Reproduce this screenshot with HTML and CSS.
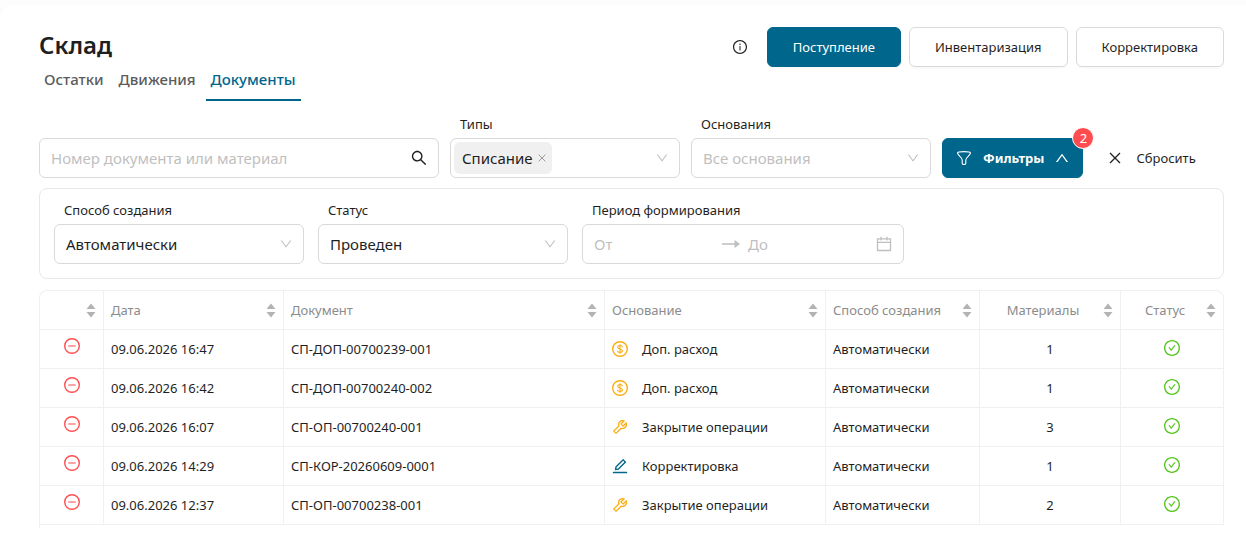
FILE: index.html
```html
<!DOCTYPE html>
<html lang="ru">
<head>
  <meta charset="UTF-8">
  <meta name="viewport" content="width=device-width, initial-scale=1">
  <title>Склад</title>
  <link rel="stylesheet" href="styles.css">
</head>
<body>
  <!-- Icons -->
  <svg class="sprite" aria-hidden="true">
    <symbol id="i-info" viewBox="64 64 896 896">
      <path d="M512 64C264.6 64 64 264.6 64 512s200.6 448 448 448 448-200.6 448-448S759.4 64 512 64zm0 820c-205.4 0-372-166.6-372-372s166.6-372 372-372 372 166.6 372 372-166.6 372-372 372z"/>
      <path d="M464 336a48 48 0 1096 0 48 48 0 10-96 0zm72 112h-48c-4.400 0-8 3.600-8 8v272c0 4.400 3.600 8 8 8h48c4.400 0 8-3.600 8-8V456c0-4.400-3.600-8-8-8z"/>
    </symbol>
    <symbol id="i-search" viewBox="64 64 896 896">
      <path d="M909.6 854.5L649.9 594.8C690.2 542.7 712 479 712 412c0-80.2-31.3-155.400-87.900-212.100-56.600-56.700-132-87.900-212.100-87.900s-155.500 31.300-212.100 87.900C143.2 256.5 112 331.8 112 412c0 80.100 31.300 155.500 87.900 212.100C256.5 680.8 331.8 712 412 712c67 0 130.600-21.800 182.700-62l259.700 259.600a8.200 8.200 0 0011.600 0l43.600-43.500a8.200 8.200 0 000-11.600zM570.4 570.4C528 612.7 471.8 636 412 636s-116-23.300-158.400-65.600C211.3 528 188 471.8 188 412s23.300-116.100 65.600-158.400C296 211.3 352.2 188 412 188s116.100 23.200 158.400 65.600S636 352.2 636 412s-23.300 116.100-65.600 158.400z"/>
    </symbol>
    <symbol id="i-down" viewBox="64 64 896 896">
      <path d="M884 256h-75c-5.100 0-9.900 2.500-12.900 6.600L512 654.2 227.9 262.6c-3-4.100-7.800-6.600-12.900-6.600h-75c-6.500 0-10.300 7.400-6.500 12.700l352.600 486.100c12.800 17.600 39 17.600 51.700 0l352.600-486.100c3.900-5.300.1-12.700-6.400-12.700z"/>
    </symbol>
    <symbol id="i-close" viewBox="0 0 12 12">
      <path d="M1 1l10 10M11 1L1 11" fill="none" stroke="currentColor" stroke-width="1.300"/>
    </symbol>
    <symbol id="i-filter" viewBox="0 0 16 16">
      <path d="M1.500 2.800C1.500 2.100 4 1.600 8 1.600s6.500.5 6.500 1.200c0 2.600-4.700 4.600-4.700 7.200v3.200c0 .7-.8 1.300-1.800 1.300s-1.800-.6-1.800-1.300V10C6.200 7.400 1.500 5.400 1.500 2.800z" fill="none" stroke="currentColor" stroke-width="1.100"/>
    </symbol>
    <symbol id="i-arrow" viewBox="0 0 18 10">
      <path d="M0 4.300h12.500V1L18 5l-5.500 4V5.700H0z"/>
    </symbol>
    <symbol id="i-calendar" viewBox="64 64 896 896">
      <path d="M880 184H712v-64c0-4.400-3.600-8-8-8h-56c-4.400 0-8 3.600-8 8v64H384v-64c0-4.400-3.600-8-8-8h-56c-4.400 0-8 3.600-8 8v64H144c-17.700 0-32 14.300-32 32v664c0 17.700 14.300 32 32 32h736c17.700 0 32-14.300 32-32V216c0-17.700-14.300-32-32-32zm-40 656H184V460h656v380zM184 392V256h128v48c0 4.400 3.600 8 8 8h56c4.400 0 8-3.600 8-8v-48h256v48c0 4.400 3.600 8 8 8h56c4.400 0 8-3.600 8-8v-48h128v136H184z"/>
    </symbol>
    <symbol id="i-sort" viewBox="0 0 10 15">
      <path d="M5 .5L9.500 6h-9zM5 14.500L.5 9h9z"/>
    </symbol>
    <symbol id="i-minus" viewBox="0 0 16 16">
      <circle cx="8" cy="8" r="7.300" fill="none" stroke="currentColor" stroke-width="1.400"/>
      <path d="M4.300 8h7.400" fill="none" stroke="currentColor" stroke-width="1.400" opacity=".75"/>
    </symbol>
    <symbol id="i-check" viewBox="64 64 896 896">
      <path d="M512 64C264.6 64 64 264.6 64 512s200.6 448 448 448 448-200.6 448-448S759.4 64 512 64zm0 820c-205.4 0-372-166.6-372-372s166.6-372 372-372 372 166.6 372 372-166.6 372-372 372z"/>
      <path d="M699 353h-46.900c-10.200 0-19.900 4.900-25.900 13.300L469 584.3l-71.200-98.800c-6-8.300-15.600-13.300-25.900-13.300H325c-6.500 0-10.300 7.400-6.500 12.700l124.600 172.800a31.800 31.800 0 0051.700 0l210.600-292c3.900-5.300.1-12.700-6.400-12.700z"/>
    </symbol>
    <symbol id="i-dollar" viewBox="0 0 16 16">
      <circle cx="8" cy="8" r="7.300" fill="none" stroke="currentColor" stroke-width="1.400"/>
      <path d="M10.300 6.100C10.200 5.100 9.300 4.500 8 4.500s-2.300.6-2.300 1.700c0 1.200 1.100 1.500 2.300 1.800s2.400.6 2.400 1.800c0 1.100-1 1.700-2.400 1.700s-2.400-.6-2.500-1.700M8 3.300v9.400" fill="none" stroke="currentColor" stroke-width="1.100"/>
    </symbol>
    <symbol id="i-tool" viewBox="64 64 896 896">
      <path d="M876.6 239.5c-.5-.9-1.200-1.800-2-2.500-5-5-13.100-5-18.100 0L684.2 409.3l-67.900-67.900L788.7 169c.8-.8 1.400-1.600 2-2.500 3.600-6.100 1.600-13.900-4.500-17.500-98.200-58-226.800-44.700-311.300 39.700-67 67-89.200 162-66.500 247.400l-293 293c-3 3-2.800 7.900.3 11l169.700 169.700c3.100 3.100 8.100 3.300 11 .3l292.900-292.900c85.500 22.800 180.500.7 247.600-66.400 84.400-84.500 97.700-213.100 39.700-311.300zM786 499.8c-58.100 58.100-145.300 69.300-214.600 33.600l-8.800 8.800-.1-.1-274 274.100-79.200-79.200 230.100-230.100s0 .1.100.1l52.800-52.800c-35.700-69.300-24.500-156.500 33.600-214.600a184.200 184.200 0 01144-53.500L537 318.9a32.050 32.050 0 000 45.300l124.500 124.500a32.050 32.050 0 0045.300 0l132.800-132.800c3.700 51.800-14.400 104.800-53.600 143.900z"/>
    </symbol>
    <symbol id="i-edit" viewBox="64 64 896 896">
      <path d="M257.7 752c2 0 4-.2 6-.5L431.9 722c2-.4 3.900-1.300 5.300-2.800l423.900-423.900a9.960 9.960 0 000-14.100L694.9 114.9c-1.900-1.900-4.400-2.900-7.100-2.900s-5.200 1-7.100 2.900L256.8 538.8c-1.500 1.500-2.400 3.300-2.800 5.300l-29.500 168.200a33.500 33.500 0 009.400 29.800c6.600 6.400 14.900 9.900 23.800 9.900zm67.400-174.400L687.8 215l73.300 73.300-362.700 362.600-88.900 15.700 15.600-89zM880 836H144c-17.700 0-32 14.300-32 32v36c0 4.400 3.600 8 8 8h784c4.400 0 8-3.600 8-8v-36c0-17.700-14.300-32-32-32z"/>
    </symbol>
  </svg>

  <main class="card">
    <header class="header">
      <div>
        <h1 class="title">Склад</h1>
        <nav class="tabs">
          <a class="tab" href="#stock">Остатки</a>
          <a class="tab" href="#moves">Движения</a>
          <a class="tab tab-active" href="#docs" aria-current="page">Документы</a>
        </nav>
      </div>
      <div class="actions">
        <button class="icon-btn info-btn" aria-label="Справка"><svg class="icon-14"><use href="#i-info"/></svg></button>
        <button class="btn btn-primary">Поступление</button>
        <button class="btn">Инвентаризация</button>
        <button class="btn">Корректировка</button>
      </div>
    </header>

    <form class="filters">
      <div class="box search">
        <input class="control" type="text" placeholder="Номер документа или материал" aria-label="Номер документа или материал">
        <button type="button" class="icon-btn" aria-label="Найти"><svg class="icon-16"><use href="#i-search"/></svg></button>
      </div>

      <div class="field field-types">
        <label for="types">Типы</label>
        <div class="box box-tags">
          <span class="tag">Списание
            <button type="button" class="icon-btn tag-close" aria-label="Удалить"><svg class="icon-8"><use href="#i-close"/></svg></button>
          </span>
          <select class="control" id="types"><option value=""></option></select>
          <svg class="arrow"><use href="#i-down"/></svg>
        </div>
      </div>

      <div class="field field-reasons">
        <label for="reasons">Основания</label>
        <div class="box">
          <select class="control control-empty" id="reasons"><option>Все основания</option></select>
          <svg class="arrow"><use href="#i-down"/></svg>
        </div>
      </div>

      <button type="button" class="btn btn-primary btn-filter">
        <svg class="icon-16"><use href="#i-filter"/></svg>
        Фильтры
        <svg class="icon-14 icon-up"><use href="#i-down"/></svg>
        <span class="badge">2</span>
      </button>

      <button type="reset" class="reset">
        <svg class="icon-12"><use href="#i-close"/></svg>
        Сбросить
      </button>
    </form>

    <section class="panel">
      <div class="field field-wide">
        <label for="method">Способ создания</label>
        <div class="box">
          <select class="control" id="method"><option>Автоматически</option></select>
          <svg class="arrow"><use href="#i-down"/></svg>
        </div>
      </div>
      <div class="field field-wide">
        <label for="status">Статус</label>
        <div class="box">
          <select class="control" id="status"><option>Проведен</option></select>
          <svg class="arrow"><use href="#i-down"/></svg>
        </div>
      </div>
      <div class="field field-period">
        <label for="from">Период формирования</label>
        <div class="box">
          <input class="control" id="from" type="text" placeholder="От">
          <svg class="range-arrow"><use href="#i-arrow"/></svg>
          <input class="control" id="to" type="text" placeholder="До" aria-label="До">
          <svg class="icon-16 calendar"><use href="#i-calendar"/></svg>
        </div>
      </div>
    </section>

    <div class="table-wrap">
      <table class="table">
        <colgroup>
          <col class="col-type">
          <col class="col-date">
          <col>
          <col class="col-reason">
          <col class="col-method">
          <col class="col-count">
          <col class="col-status">
        </colgroup>
        <thead>
          <tr>
            <th><div class="th"><span></span><button class="icon-btn" aria-label="Сортировать"><svg class="sort"><use href="#i-sort"/></svg></button></div></th>
            <th><div class="th"><span>Дата</span><button class="icon-btn" aria-label="Сортировать"><svg class="sort"><use href="#i-sort"/></svg></button></div></th>
            <th><div class="th"><span>Документ</span><button class="icon-btn" aria-label="Сортировать"><svg class="sort"><use href="#i-sort"/></svg></button></div></th>
            <th><div class="th"><span>Основание</span><button class="icon-btn" aria-label="Сортировать"><svg class="sort"><use href="#i-sort"/></svg></button></div></th>
            <th><div class="th"><span>Способ создания</span><button class="icon-btn" aria-label="Сортировать"><svg class="sort"><use href="#i-sort"/></svg></button></div></th>
            <th class="center"><div class="th"><span>Материалы</span><button class="icon-btn" aria-label="Сортировать"><svg class="sort"><use href="#i-sort"/></svg></button></div></th>
            <th class="center"><div class="th"><span>Статус</span><button class="icon-btn" aria-label="Сортировать"><svg class="sort"><use href="#i-sort"/></svg></button></div></th>
          </tr>
        </thead>
        <tbody>
          <tr>
            <td class="mark mark-type red"><svg class="icon-16"><use href="#i-minus"/></svg></td>
            <td>09.06.2026 16:47</td>
            <td>СП-ДОП-00700239-001</td>
            <td><div class="reason"><svg class="icon-16 orange"><use href="#i-dollar"/></svg>Доп. расход</div></td>
            <td>Автоматически</td>
            <td class="center">1</td>
            <td class="mark green"><svg class="icon-16"><use href="#i-check"/></svg></td>
          </tr>
          <tr>
            <td class="mark mark-type red"><svg class="icon-16"><use href="#i-minus"/></svg></td>
            <td>09.06.2026 16:42</td>
            <td>СП-ДОП-00700240-002</td>
            <td><div class="reason"><svg class="icon-16 orange"><use href="#i-dollar"/></svg>Доп. расход</div></td>
            <td>Автоматически</td>
            <td class="center">1</td>
            <td class="mark green"><svg class="icon-16"><use href="#i-check"/></svg></td>
          </tr>
          <tr>
            <td class="mark mark-type red"><svg class="icon-16"><use href="#i-minus"/></svg></td>
            <td>09.06.2026 16:07</td>
            <td>СП-ОП-00700240-001</td>
            <td><div class="reason"><svg class="icon-16 orange"><use href="#i-tool"/></svg>Закрытие операции</div></td>
            <td>Автоматически</td>
            <td class="center">3</td>
            <td class="mark green"><svg class="icon-16"><use href="#i-check"/></svg></td>
          </tr>
          <tr>
            <td class="mark mark-type red"><svg class="icon-16"><use href="#i-minus"/></svg></td>
            <td>09.06.2026 14:29</td>
            <td>СП-КОР-20260609-0001</td>
            <td><div class="reason"><svg class="icon-16 blue"><use href="#i-edit"/></svg>Корректировка</div></td>
            <td>Автоматически</td>
            <td class="center">1</td>
            <td class="mark green"><svg class="icon-16"><use href="#i-check"/></svg></td>
          </tr>
          <tr>
            <td class="mark mark-type red"><svg class="icon-16"><use href="#i-minus"/></svg></td>
            <td>09.06.2026 12:37</td>
            <td>СП-ОП-00700238-001</td>
            <td><div class="reason"><svg class="icon-16 orange"><use href="#i-tool"/></svg>Закрытие операции</div></td>
            <td>Автоматически</td>
            <td class="center">2</td>
            <td class="mark green"><svg class="icon-16"><use href="#i-check"/></svg></td>
          </tr>
        </tbody>
      </table>
    </div>
  </main>
</body>
</html>
```
FILE: styles.css
```css
* {
  box-sizing: border-box;
}

body {
  margin: 0;
  padding-top: 5px;
  background: #fcfcfc;
  color: #1f1f1f;
  font-family: 'Segoe UI', 'Noto Sans', sans-serif;
  font-size: 13px;
  line-height: 20px;
}

button, input, select {
  font: inherit;
  color: inherit;
}

svg {
  fill: currentColor;
  flex: none;
}

.sprite {
  position: absolute;
  width: 0;
  height: 0;
}

.card {
  min-height: calc(100vh - 5px);
  padding: 22px 22px 20px 39px;
  background: #fff;
  border-radius: 14px 0 0 0;
}

/* Header */
.header {
  display: flex;
  justify-content: space-between;
  align-items: flex-start;
}

.title {
  margin: 0;
  font-size: 24px;
  font-weight: 600;
  line-height: 36px;
}

.tabs {
  display: flex;
  gap: 5px;
}

.tab {
  padding: 6px 5px 10px;
  border-bottom: 2px solid transparent;
  color: #5c5c5c;
  font-size: 15px;
  font-weight: 500;
  text-decoration: none;
}

.tab-active {
  color: #00668c;
  border-bottom-color: #00668c;
}

.actions {
  display: flex;
  align-items: center;
  gap: 8px;
}

.btn {
  height: 40px;
  padding: 0 25px;
  background: #fff;
  border: 1px solid #d9d9d9;
  border-radius: 6px;
  box-shadow: 0 2px 0 rgba(0, 0, 0, 0.02);
  cursor: pointer;
}

.btn-primary {
  background: #00668c;
  border-color: #00668c;
  color: #fff;
}

.icon-btn {
  display: flex;
  padding: 0;
  background: none;
  border: none;
  cursor: pointer;
}

.info-btn {
  margin-right: 12px;
}

/* Filters */
.filters {
  display: flex;
  align-items: flex-end;
  gap: 11px;
  margin-top: 13px;
}

.field label {
  display: block;
  padding: 0 10px 4px;
}

.search {
  width: 400px;
}

.field-types {
  width: 230px;
}

.field-reasons {
  width: 240px;
}

.field-wide {
  width: 250px;
}

.field-period {
  width: 322px;
}

.box {
  display: flex;
  align-items: center;
  height: 40px;
  padding: 0 11px;
  background: #fff;
  border: 1px solid #d9d9d9;
  border-radius: 6px;
}

.box-tags {
  padding-left: 3px;
}

.control {
  flex: 1;
  min-width: 0;
  padding: 0;
  appearance: none;
  background: none;
  border: none;
  outline: none;
  font-size: 15px;
}

.control::placeholder,
.control-empty {
  color: #bfbfbf;
  opacity: 1;
}

.arrow {
  width: 12px;
  height: 12px;
  color: #bfbfbf;
  pointer-events: none;
}

.tag {
  display: flex;
  align-items: center;
  gap: 5px;
  height: 32px;
  padding: 0 6px 0 8px;
  background: #f0f0f0;
  border-radius: 6px;
  font-size: 15px;
}

.tag-close {
  color: #8c8c8c;
}

.btn-filter {
  position: relative;
  display: flex;
  align-items: center;
  gap: 11px;
  padding: 0 13px;
  font-weight: 700;
}

.badge {
  position: absolute;
  top: -12px;
  right: -12px;
  width: 22px;
  height: 22px;
  border: 1px solid #fff;
  border-radius: 11px;
  background: #ff4d4f;
  font-weight: 400;
  text-align: center;
}

.icon-up {
  transform: rotate(180deg);
}

.reset {
  display: flex;
  align-items: center;
  gap: 15px;
  height: 40px;
  margin-left: 9px;
  background: none;
  border: none;
  cursor: pointer;
}

.panel {
  display: flex;
  gap: 14px;
  margin-top: 10px;
  padding: 11px 14px 14px;
  border: 1px solid #e8e8e8;
  border-radius: 8px;
}

.range-arrow {
  width: 18px;
  height: 10px;
  margin-right: 8px;
  color: #bfbfbf;
}

.calendar {
  color: #bfbfbf;
}

/* Table */
.table-wrap {
  margin-top: 11px;
  padding-bottom: 3px;
  border-top: 1px solid #f0f0f0;
  border-left: 1px solid #f0f0f0;
  border-radius: 8px 8px 0 0;
}

.table {
  width: 100%;
  table-layout: fixed;
  border-collapse: separate;
  border-spacing: 0;
}

.table th,
.table td {
  height: 39px;
  padding: 0 7px;
  border-right: 1px solid #f0f0f0;
  border-bottom: 1px solid #f0f0f0;
  text-align: left;
}

.table th {
  color: #8c8c8c;
  font-weight: 400;
}

.table th:last-child {
  border-top-right-radius: 8px;
}

.table .center {
  text-align: center;
}

.table .mark {
  padding-bottom: 2px;
}

.table .mark-type {
  padding-bottom: 6px;
}

.mark svg {
  display: block;
  margin: 0 auto;
}

.col-type {
  width: 64px;
}

.col-date {
  width: 180px;
}

.col-reason {
  width: 221px;
}

.col-method {
  width: 154px;
}

.col-count {
  width: 141px;
}

.col-status {
  width: 103px;
}

.th {
  display: flex;
  align-items: center;
  gap: 4px;
}

.th span {
  flex: 1;
}

.sort {
  width: 10px;
  height: 15px;
  color: #b3b3b3;
}

.reason {
  display: flex;
  align-items: center;
  gap: 14px;
}

.red {
  color: #ff4d4f;
}

.green {
  color: #52c41a;
}

.orange {
  color: #faad14;
}

.blue {
  color: #00668c;
}

.icon-8 {
  width: 8px;
  height: 8px;
}

.icon-12 {
  width: 12px;
  height: 12px;
}

.icon-14 {
  width: 14px;
  height: 14px;
}

.icon-16 {
  width: 16px;
  height: 16px;
}
```
